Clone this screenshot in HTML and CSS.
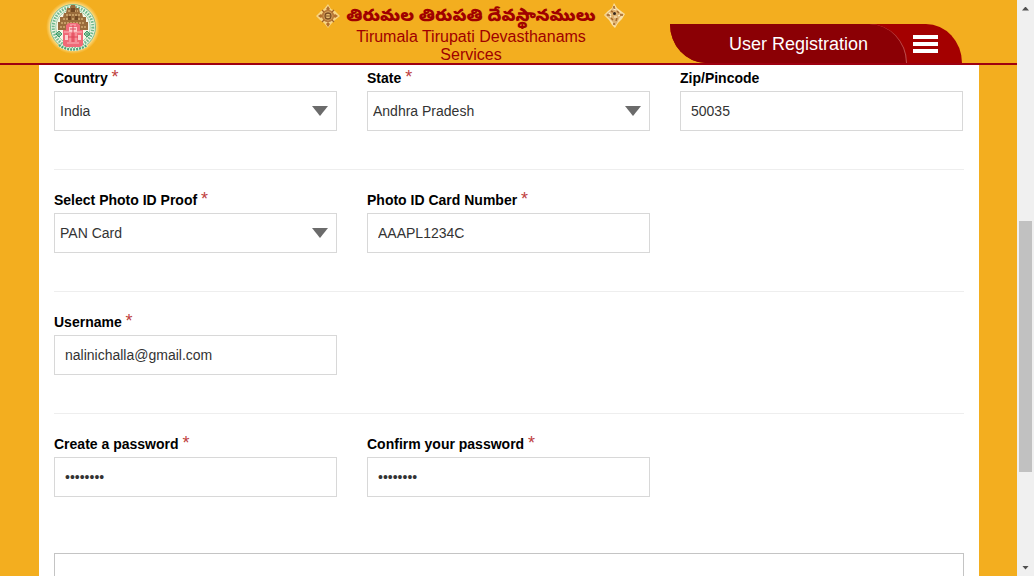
FILE: index.html
```
<!DOCTYPE html>
<html lang="en">
<head>
<meta charset="utf-8">
<title>Tirumala Tirupati Devasthanams Services - User Registration</title>
<meta name="viewport" content="width=device-width, initial-scale=1">
<link rel="stylesheet" href="styles.css">
</head>
<body>
<div class="page">
  <header class="header">
    <div class="brand">
      <a class="brand-link" href="#" aria-label="Home">
        <svg class="seal" viewBox="0 0 54 54" aria-hidden="true">
          <defs>
            <radialGradient id="glow"><stop offset=".8" stop-color="#ffeeb0"/><stop offset="1" stop-color="#ffe08a" stop-opacity="0"/></radialGradient>
          </defs>
          <circle cx="27" cy="27" r="27" fill="url(#glow)"/>
          <circle cx="27" cy="27" r="22.5" fill="#f1f6e4" stroke="#5bb083" stroke-width=".8"/>
          <circle cx="27" cy="27" r="19.8" fill="none" stroke="#6fb98e" stroke-width="3" stroke-dasharray="1.6 1.2"/>
          <circle cx="27" cy="27" r="17.2" fill="#f8f6e6" stroke="#74bb92" stroke-width=".7"/>
          <path d="M25 5h4l1 3h3l1 5h2l1 4h3v5h2v8H12v-8h2v-5h3l1-4h2l1-5h3z" fill="#9a6c3c"/>
          <path d="M22 11h10M20 15h14M17 19h20M15 23h24M14 27h26" stroke="#d3ac74" stroke-width="1.3" stroke-dasharray="2 1"/>
          <path d="M25 8h4v4h-4zM22 16h3v4h-3zM29 16h3v4h-3z" fill="#744a25"/>
          <path d="M20 25l3-2h8l3 2v5h3v15l-2 2H19l-2-2V30h3z" fill="#f06a78"/>
          <path d="M23 27h8v5h-8zM19 35h3v5h-3zM32 35h3v5h-3z" fill="#fbcfcf"/>
          <path d="M18 32h18M21 43h12M24 25h6M24 33v9M30 33v9" stroke="#fbb9bc"/>
          <path d="M24 29h6M27 25v17M22 37h10" stroke="#dd4658"/>
          <path d="M13 31l3 3-3 3-3-3zM41 31l3 3-3 3-3-3zM10 34h6M38 34h6M13 31v6M41 31v6" fill="none" stroke="#3a9a68"/>
          <path d="M13 45c8 6 20 6 28 0" fill="none" stroke="#f1f6e4" stroke-width="3"/>
          <path d="M13 45c8 6 20 6 28 0" fill="none" stroke="#4ca676" stroke-width="2.4" stroke-dasharray="2 1"/>
        </svg>
      </a>
    </div>
    <div class="title">
      <div class="title-row">
        <svg class="emblem" viewBox="0 0 24 24" aria-hidden="true">
          <path d="M12 0l3 5 4 2 5 5-5 4-3 3-4 5-4-5-4-3-4-4 5-5 3-2z" fill="#f8d584"/>
          <path d="M12 2l2 3-2 2-2-2zM12 18l2 2-2 3-2-3zM2 12l3-2 2 2-2 2zM22 12l-3-2-2 2 2 2z" fill="#b36e2b"/>
          <circle cx="12" cy="12" r="6.2" fill="#b9793a"/><circle cx="12" cy="12" r="4.4" fill="#e9be70"/>
          <circle cx="12" cy="12" r="3" fill="none" stroke="#7c4a20" stroke-width="1.4"/>
          <path d="M6 6l2 2M18 6l-2 2M6 18l2-2M18 18l-2-2" stroke="#a06229" stroke-width="1.2"/>
          <path d="M10 12h4" stroke="#7c4a20"/>
        </svg>
        <span class="telugu" lang="te">తిరుమల తిరుపతి దేవస్థానములు</span>
        <svg class="emblem" viewBox="0 0 24 26" aria-hidden="true">
          <path d="M12 0l3 5 4 3 4 3-3 5-4 4-3 5-3-3-3-5-5-5 4-4 4-3z" fill="#fae0a4"/>
          <path d="M12 2l2 4 4 4 4 1-4 3-3 6-2 3-3-5-3-3-4-3 4-3 3-3z" fill="#dfb271"/>
          <path d="M12 3v4M9 8l2 1M15 8l2 2M5 12h3M18 12h3M9 15l2 2M15 15l-1 3M12 20v2" stroke="#a4682c" stroke-width="1.5"/>
          <path d="M7 10l2 2M12 14h3M11 6l3 1M8 14l1-1M16 13l2-1" stroke="#fff0cc" stroke-width="1.2"/>
          <circle cx="12.5" cy="10.5" r="1.5" fill="#33271e"/>
        </svg>
      </div>
      <div class="title-english">Tirumala Tirupati Devasthanams<br>Services</div>
    </div>
    <nav class="tab" aria-label="Main">
      <h1 class="tab-label">User Registration</h1>
      <button class="menu" type="button" aria-label="Open menu">
        <span class="menu-bar"></span><span class="menu-bar"></span><span class="menu-bar"></span>
      </button>
    </nav>
  </header>
  <main class="main">
    <form class="form">
      <section class="row">
        <div class="field">
          <label class="label" for="country">Country <span class="required">*</span></label>
          <div class="picker"><select class="control select" id="country"><option>India</option></select></div>
        </div>
        <div class="field">
          <label class="label" for="state">State <span class="required">*</span></label>
          <div class="picker"><select class="control select" id="state"><option>Andhra Pradesh</option></select></div>
        </div>
        <div class="field">
          <label class="label" for="zip">Zip/Pincode</label>
          <input class="control" id="zip" type="text" value="50035">
        </div>
      </section>
      <section class="row">
        <div class="field">
          <label class="label" for="proof">Select Photo ID Proof <span class="required">*</span></label>
          <div class="picker"><select class="control select" id="proof"><option>PAN Card</option></select></div>
        </div>
        <div class="field">
          <label class="label" for="card">Photo ID Card Number <span class="required">*</span></label>
          <input class="control" id="card" type="text" value="AAAPL1234C">
        </div>
      </section>
      <section class="row">
        <div class="field">
          <label class="label" for="username">Username <span class="required">*</span></label>
          <input class="control" id="username" type="text" value="nalinichalla@gmail.com">
        </div>
      </section>
      <section class="row">
        <div class="field">
          <label class="label" for="password">Create a password <span class="required">*</span></label>
          <input class="control" id="password" type="password" value="password">
        </div>
        <div class="field">
          <label class="label" for="confirm">Confirm your password <span class="required">*</span></label>
          <input class="control" id="confirm" type="password" value="password">
        </div>
      </section>
      <div class="panel"></div>
    </form>
  </main>
</div>
<div class="scrollbar" aria-hidden="true">
  <span class="scroll-arrow"></span>
  <span class="scroll-thumb"></span>
  <span class="scroll-arrow scroll-arrow-down"></span>
</div>
</body>
</html>
```
FILE: styles.css
```
* { box-sizing: border-box; }

body {
  margin: 0;
  display: flex;
  height: 100vh;
  overflow: hidden;
  background: #f3ae1f;
  font-family: "Liberation Sans", Arial, sans-serif;
  font-size: 14px;
  color: #000;
}

.page {
  flex: 1;
  min-width: 0;
  display: flex;
  flex-direction: column;
}

.header {
  display: flex;
  align-items: flex-start;
  height: 65px;
  flex: none;
  border-bottom: 2px solid #9e0010;
}

.brand { width: 272px; padding-left: 46px; }
.brand-link, .seal { display: block; width: 54px; height: 54px; }

.title {
  flex: 1;
  padding-top: 3px;
  text-align: center;
  color: #a00000;
}

.title-row {
  display: flex;
  align-items: center;
  justify-content: center;
  gap: 6px;
  height: 25px;
}

.emblem { width: 24px; height: 26px; flex: none; }

.telugu {
  padding-top: 4px;
  font-family: "Noto Sans Telugu", "Noto Serif Telugu", "Liberation Sans", sans-serif;
  font-size: 17px;
  font-weight: 900;
  line-height: 24px;
  white-space: nowrap;
}

.title-english { font-size: 16px; line-height: 18px; }

.tab {
  display: flex;
  align-items: stretch;
  width: 292px;
  height: 39px;
  margin: 24px 55px 0 0;
  background: #a40000;
  border-radius: 0 36px 0 36px / 0 39px 0 39px;
  overflow: hidden;
}

.tab-label {
  width: 237px;
  margin: 0;
  padding-right: 38px;
  background: #8b0005;
  border-right: 1px solid #c05050;
  border-radius: 0 38px 0 0 / 0 39px 0 0;
  color: #fff;
  font-size: 18px;
  font-weight: normal;
  line-height: 40px;
  text-align: right;
  white-space: nowrap;
}

.menu {
  display: flex;
  flex-direction: column;
  justify-content: center;
  gap: 3px;
  margin-left: 6px;
  padding: 0;
  border: 0;
  background: none;
}

.menu-bar { width: 25px; height: 4px; background: #fff; }

.main {
  flex: 1;
  min-height: 0;
  padding: 0 38px 0 39px;
}

.form {
  height: 100%;
  padding: 3px 15px 0;
  background: #fff;
  overflow: hidden;
}

.row {
  display: grid;
  grid-template-columns: repeat(3, 1fr);
  gap: 30px;
  padding: 0 1px 38px 0;
}

.row + .row { padding-top: 20px; border-top: 1px solid #eee; }

.label {
  display: block;
  height: 20px;
  margin-bottom: 3px;
  font-weight: bold;
  line-height: 20px;
}

.required { color: #c04040; font-weight: normal; font-size: 18px; line-height: 16px; }

.control {
  display: block;
  width: 100%;
  height: 40px;
  margin: 0;
  padding: 0 10px;
  border: 1px solid #d8d8d8;
  border-radius: 0;
  background: #fff;
  color: #333;
  font: inherit;
}

.picker { position: relative; }

.picker::after {
  content: "";
  position: absolute;
  top: 15px;
  right: 9px;
  width: 16px;
  height: 10px;
  background: #6b6b6b;
  clip-path: polygon(0 0, 100% 0, 50% 100%);
  pointer-events: none;
}

.select { appearance: none; padding: 0 5px; }

.panel { height: 120px; margin-top: 18px; border: 1px solid #c4c4c4; }

.scrollbar {
  display: grid;
  grid-template-rows: 17px 204fr 251fr 87fr 17px;
  width: 17px;
  background: #f0f0f0;
}

.scroll-thumb { grid-row: 3; margin: 0 2px; background: #c1c1c1; }

.scroll-arrow {
  grid-row: 1;
  width: 7px;
  height: 4px;
  place-self: center;
  background: #505050;
  clip-path: polygon(50% 0, 100% 100%, 0 100%);
}

.scroll-arrow-down { grid-row: 5; clip-path: polygon(0 0, 100% 0, 50% 100%); }
```
